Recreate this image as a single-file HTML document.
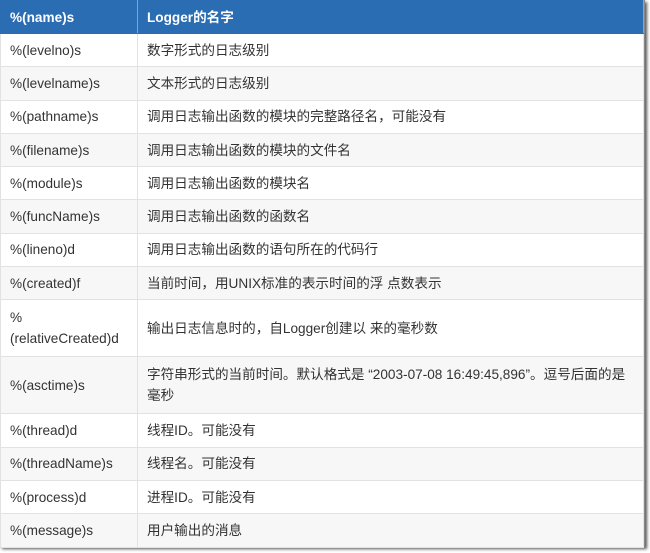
<!DOCTYPE html>
<html><head><meta charset="utf-8"><style>
html,body{margin:0;padding:0;background:#fff;width:650px;height:553px;overflow:hidden}
.wrap{position:absolute;left:0;top:0;width:644px;height:546px;box-shadow:2px 2px 3px #555;border-right:1px solid #888;border-bottom:1px solid #888;background:#fff}
table{border-collapse:collapse;width:644px;font-family:"Liberation Sans","Noto Sans CJK SC",sans-serif;font-size:13.6px;color:#333}
td,th{border:1px solid #e2e2e2;padding:0 9px;text-align:left;vertical-align:middle;line-height:21px}
th{background:#2b6db3;color:#fff;font-weight:bold;height:32px;border-color:#2b6db3;border-right:1px solid #7fa6d3}
td:first-child,th:first-child{width:118px}
tr.g td{background:#f7f7f7}
tr td{height:32.3px}
tr.t td{height:56px}
</style></head><body><div class="wrap"><table>
<tr><th>%(name)s</th><th>Logger的名字</th></tr>
<tr><td>%(levelno)s</td><td>数字形式的日志级别</td></tr>
<tr class="g"><td>%(levelname)s</td><td>文本形式的日志级别</td></tr>
<tr><td>%(pathname)s</td><td>调用日志输出函数的模块的完整路径名，可能没有</td></tr>
<tr class="g"><td>%(filename)s</td><td>调用日志输出函数的模块的文件名</td></tr>
<tr><td>%(module)s</td><td>调用日志输出函数的模块名</td></tr>
<tr class="g"><td>%(funcName)s</td><td>调用日志输出函数的函数名</td></tr>
<tr><td>%(lineno)d</td><td>调用日志输出函数的语句所在的代码行</td></tr>
<tr class="g"><td>%(created)f</td><td>当前时间，用UNIX标准的表示时间的浮 点数表示</td></tr>
<tr class="t"><td>%<br>(relativeCreated)d</td><td>输出日志信息时的，自Logger创建以 来的毫秒数</td></tr>
<tr class="g t"><td>%(asctime)s</td><td>字符串形式的当前时间。默认格式是 “2003-07-08 16:49:45,896”。逗号后面的是<br>毫秒</td></tr>
<tr><td>%(thread)d</td><td>线程ID。可能没有</td></tr>
<tr class="g"><td>%(threadName)s</td><td>线程名。可能没有</td></tr>
<tr><td>%(process)d</td><td>进程ID。可能没有</td></tr>
<tr class="g"><td>%(message)s</td><td>用户输出的消息</td></tr>
</table></div></body></html>
